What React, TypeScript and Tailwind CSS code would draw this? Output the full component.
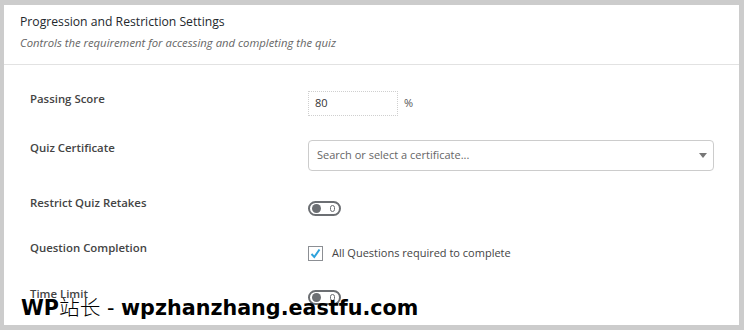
import React from "react";

function Toggle({ className = "" }: { className?: string }) {
  return (
    <span
      className={
        "flex h-[15px] w-[33px] items-center justify-between rounded-full border-2 border-[#6c6f73] pr-[4px] pl-[2px] " +
        className
      }
    >
      <span className="h-[9px] w-[9px] rounded-full bg-[#6c6f73]" />
      <span className="h-[7px] w-[5px] rounded-full border-[1.5px] border-[#6c6f73]" />
    </span>
  );
}

function Row({
  label,
  children,
}: {
  label: string;
  children: React.ReactNode;
}) {
  return (
    <div className="flex items-start">
      <div className="w-[278px] shrink-0 text-[11.4px] font-semibold leading-4 text-[#444]">
        {label}
      </div>
      <div className="flex-1">{children}</div>
    </div>
  );
}

export default function App() {
  return (
    <div
      className="relative h-[330px] w-[744px] overflow-hidden bg-[#cccccc] pt-[5px] pr-[5px] pb-[5px] pl-[4px]"
      style={{ fontFamily: '"Open Sans", "Noto Sans", sans-serif' }}
    >
      <div className="h-full bg-white">
        <div className="border-b border-[#e2e2e2] px-4 pt-[8px] pb-[13px]">
          <h2 className="text-[12.2px] leading-[18px] text-[#23282d]">
            Progression and Restriction Settings
          </h2>
          <p className="mt-[4px] text-[11.3px] italic leading-4 text-[#666]">
            Controls the requirement for accessing and completing the quiz
          </p>
        </div>

        <div className="flex flex-col gap-6 pt-[26px] pr-[24px] pl-[26px]">
          <Row label="Passing Score">
            <div className="flex items-center gap-[6px]">
              <div className="flex h-[25px] w-[90px] items-center border border-dotted border-[#cfcfcf] px-[6px] text-[11px] text-[#333]">
                80
              </div>
              <span className="text-[11px] text-[#555]">%</span>
            </div>
          </Row>

          <Row label="Quiz Certificate">
            <div className="flex h-[31px] w-[406px] items-center justify-between rounded-[4px] border border-[#cccccc] pr-[6px] pl-[8px]">
              <span className="text-[11px] text-[#666]">
                Search or select a certificate...
              </span>
              <svg width="8" height="5" viewBox="0 0 8 5">
                <path d="M0 0h8L4 5z" fill="#777" />
              </svg>
            </div>
          </Row>

          <Row label="Restrict Quiz Retakes">
            <Toggle className="mt-[6px]" />
          </Row>

          <Row label="Question Completion">
            <div className="mt-[5px] flex items-center gap-[9px]">
              <span className="flex h-[15px] w-[15px] items-center justify-center border border-[#8c8f94] bg-white">
                <svg width="11" height="11" viewBox="0 0 11 11">
                  <path
                    d="M1.5 6 L4.3 9 L9.5 1.5"
                    fill="none"
                    stroke="#2ea2dc"
                    strokeWidth="2"
                  />
                </svg>
              </span>
              <span className="text-[11px] text-[#444]">
                All Questions required to complete
              </span>
            </div>
          </Row>

          <Row label="Time Limit">
            <Toggle className="mt-[4px]" />
          </Row>
        </div>
      </div>

      <div
        className="absolute top-[294px] left-[21px] text-[20.7px] leading-6 font-bold whitespace-nowrap text-black"
        style={{ fontFamily: '"DejaVu Sans", "Noto Sans CJK SC", sans-serif' }}
      >
        WP<span className="font-light" style={{ fontFamily: '"Noto Sans CJK SC", sans-serif' }}>站长</span>
        <span className="font-normal"> - </span>wpzhanzhang.eastfu.com
      </div>
    </div>
  );
}
